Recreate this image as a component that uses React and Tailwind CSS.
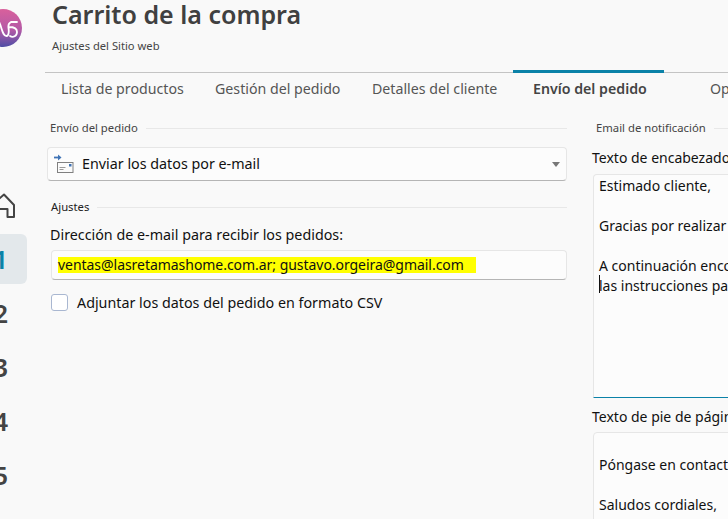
import React from 'react';

const FONT = "font-['Noto_Sans','Open_Sans',sans-serif]";

const tabs = [
  { label: 'Lista de productos', cls: 'ml-4 w-[154px]' },
  { label: 'Gestión del pedido', cls: 'w-[157px]' },
  { label: 'Detalles del cliente', cls: 'w-[161px]' },
];

const Logo = () => (
  <svg width="38" height="38" viewBox="0 0 38 38" className="-ml-[16px] mt-[9px] shrink-0">
    <defs>
      <linearGradient id="logoGrad" x1="0" y1="0" x2="0" y2="1">
        <stop offset="0" stopColor="#d9609c" />
        <stop offset="0.55" stopColor="#b45aa6" />
        <stop offset="1" stopColor="#4f4ea6" />
      </linearGradient>
    </defs>
    <circle cx="19" cy="19" r="19" fill="url(#logoGrad)" />
    <path d="M14 11 C18 17 18 27 22.5 27 C25 27 25 22 24.5 19 C24 16 25 14 27 13 H33 M25 18 C29 18 33 19 33 23 C33 27 29 29 26 27" fill="none" stroke="#fff" strokeWidth="1.8" strokeLinecap="round" />
  </svg>
);

const HomeIcon = () => (
  <svg width="33" height="26" viewBox="0 0 33 26" fill="none" stroke="#444" strokeWidth="2" className="-ml-[18px]">
    <path d="M11 11 L22 1.5 L32 12 V24 H25.5 V16 H17 V24 H11" strokeLinejoin="round" />
  </svg>
);

const NavNumber = ({ n, active }) => (
  <div className={`flex items-center justify-end w-[27px] h-[50px] rounded-r-md pr-[19px] text-[26px] font-semibold ${active ? 'bg-[#e3e8eb] text-[#0b82a8]' : 'text-[#444]'}`}>
    <span>{n}</span>
  </div>
);

const GroupLabel = ({ children, className = '' }) => (
  <div className={`flex items-center gap-2 text-[11.3px] text-[#444] ${className}`}>
    <span className="whitespace-nowrap">{children}</span>
    <span className="flex-1 h-px bg-[#e8e8e8]" />
  </div>
);

const MailIcon = () => (
  <svg width="20" height="20" viewBox="0 0 20 20" className="shrink-0">
    <path d="M0 3.5 H5" stroke="#3f73b5" strokeWidth="1.8" />
    <path d="M4 0.5 L7.5 3.5 L4 6.5 Z" fill="#3f73b5" />
    <rect x="3.5" y="8.5" width="15.5" height="10" fill="#fbfbfb" stroke="#808080" strokeWidth="1" />
    <path d="M5.5 13.5 H11.5 M5.5 15.5 H9.5" stroke="#9a9a9a" strokeWidth="1" />
    <rect x="15" y="10" width="2.5" height="2.5" fill="#3f73b5" />
  </svg>
);

const App = () => {
  return (
    <div className={`w-[728px] h-[519px] overflow-hidden flex bg-[#f9f9f9] text-[#111] ${FONT}`}>
      {/* sidebar, cut off at the left edge */}
      <aside className="w-[45px] shrink-0 flex flex-col">
        <Logo />
        <div className="mt-[146px]"><HomeIcon /></div>
        <div className="mt-[15px] flex flex-col gap-[4px]">
          <NavNumber n="1" active />
          <NavNumber n="2" />
          <NavNumber n="3" />
          <NavNumber n="4" />
          <NavNumber n="5" />
        </div>
      </aside>

      <main className="flex-1 min-w-0 flex flex-col">
        <header className="h-[72px] pl-[7px] shrink-0">
          <h1 className="text-[25px] leading-[28px] font-semibold text-[#404040] whitespace-nowrap">Carrito de la compra</h1>
          <p className="mt-[11px] text-[11.2px] leading-[14px] text-[#444]">Ajustes del Sitio web</p>
        </header>

        <nav className="relative flex border-t border-[#c4c4c4] h-[33px] items-center text-[14.2px] text-[#555] shrink-0 whitespace-nowrap">
          {tabs.map((t) => (
            <span key={t.label} className={`shrink-0 ${t.cls}`}>{t.label}</span>
          ))}
          <span className="relative shrink-0 w-[177px] font-semibold text-[#444]">
            Envío del pedido
            <span className="absolute -left-[20px] w-[151px] -top-[8px] h-[3px] bg-[#0b82a8]" />
          </span>
          <span className="shrink-0">Opciones</span>
        </nav>

        <div className="flex mt-[15px] min-w-0">
          <section className="w-[522px] shrink-0 pl-[2px]">
            <GroupLabel className="pl-[3px] h-[16px]">Envío del pedido</GroupLabel>
            <div className="mt-[11px] h-[34px] flex items-center rounded border border-[#e6e6e6] border-b-[#b5b5b5] bg-[#fcfcfc] pl-[6px] pr-[6px] text-[14.3px]">
              <MailIcon />
              <span className="ml-[8px] flex-1">Enviar los datos por e-mail</span>
              <span className="border-x-4 border-x-transparent border-t-[5px] border-t-[#777]" />
            </div>
            <GroupLabel className="pl-[4px] mt-[18px] h-[16px] !text-[#222]">Ajustes</GroupLabel>
            <label className="block ml-[3px] mt-[10px] text-[14.3px] leading-[20px]">Dirección de e-mail para recibir los pedidos:</label>
            <div className="ml-[4px] mt-[5px] h-[30px] flex items-center rounded border border-[#e6e6e6] border-b-[#b5b5b5] bg-[#fcfcfc] pl-[6px] text-[14px]">
              <span className="bg-[#ffff00] pr-[12px] leading-[16px] tracking-[-0.003em] whitespace-nowrap">ventas@lasretamashome.com.ar; gustavo.orgeira@gmail.com</span>
            </div>
            <div className="ml-[4px] mt-[12px] flex items-center gap-[9px] text-[14.3px]">
              <span className="w-[17px] h-[17px] rounded-[3px] border border-[#a9b7d1] bg-white" />
              <span>Adjuntar los datos del pedido en formato CSV</span>
            </div>
          </section>

          <section className="ml-[25px] w-[400px] shrink-0">
            <GroupLabel className="pl-[4px] h-[16px]">Email de notificación</GroupLabel>
            <div className="mt-[12px] text-[14px] leading-[20px] whitespace-nowrap">Texto de encabezado:</div>
            <div className="relative ml-[1px] mt-[6px] h-[224px] rounded-t border border-[#e6e6e6] border-b-[#0b82a8] bg-[#fcfcfc] pl-[5px] text-[14px] leading-[20px] whitespace-nowrap pt-[1px]">
              <div>Estimado cliente,</div>
              <div className="h-[20px]" />
              <div>Gracias por realizar su pedido.</div>
              <div className="h-[20px]" />
              <div>A continuación encontrará los detalles</div>
              <div>las instrucciones para completar el pago.</div>
              <span className="absolute left-[5px] top-[100px] w-px h-[18px] bg-[#111]" />
            </div>
            <div className="mt-[9px] text-[14px] leading-[20px] whitespace-nowrap">Texto de pie de página:</div>
            <div className="ml-[1px] mt-[5px] h-[120px] rounded-t border border-[#e6e6e6] bg-[#fcfcfc] pl-[5px] pt-[22px] text-[14px] leading-[20px] whitespace-nowrap">
              <div>Póngase en contacto con nosotros.</div>
              <div className="h-[20px]" />
              <div>Saludos cordiales,</div>
            </div>
          </section>
        </div>
      </main>
    </div>
  );
};

export default App;
